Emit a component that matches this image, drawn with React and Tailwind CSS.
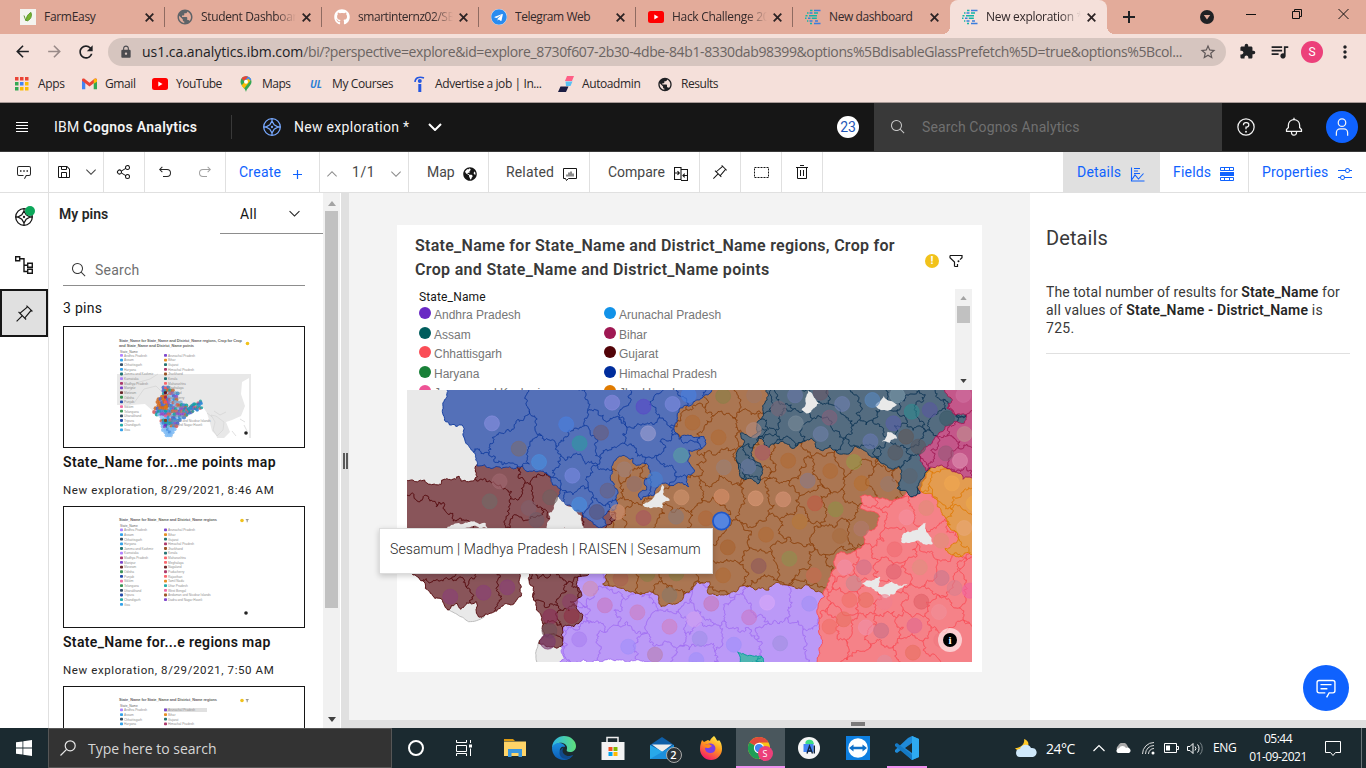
import React from "react";
import {
  MdArrowBack, MdArrowForward, MdRefresh, MdLock, MdStarBorder, MdExtension,
  MdQueueMusic, MdMoreVert, MdPublic,
} from "react-icons/md";
import { FaGithub, FaTelegram, FaGlobeAmericas } from "react-icons/fa";

/* ---------- icons ---------- */

const PATHS = {
  search: "M29 27.586l-7.552-7.552a11.018 11.018 0 1 0-1.414 1.414L27.586 29ZM4 13a9 9 0 1 1 9 9 9.01 9.01 0 0 1-9-9Z",
  chevron: "M16 22 6 12l1.4-1.4 8.6 8.6 8.6-8.6L26 12z",
  save: "M27.71 9.29l-5-5A1 1 0 0 0 22 4H6A2 2 0 0 0 4 6V26a2 2 0 0 0 2 2H26a2 2 0 0 0 2-2V10a1 1 0 0 0-.29-.71zM12 6h8v4H12zm8 20H12V18h8zm2 0V18a2 2 0 0 0-2-2H12a2 2 0 0 0-2 2v8H6V6h4v4a2 2 0 0 0 2 2h8a2 2 0 0 0 2-2V6.41l4 4V26z",
  share: "M23 20a5 5 0 0 0-3.89 1.89l-7.31-4.57a4.46 4.46 0 0 0 0-2.64l7.31-4.57A5 5 0 1 0 18 7a4.79 4.79 0 0 0 .2 1.32l-7.31 4.57a5 5 0 1 0 0 6.22l7.31 4.57A4.79 4.79 0 0 0 18 25a5 5 0 1 0 5-5zm0-16a3 3 0 1 1-3 3 3 3 0 0 1 3-3zM7 19a3 3 0 1 1 3-3 3 3 0 0 1-3 3zm16 9a3 3 0 1 1 3-3 3 3 0 0 1-3 3z",
  undo: "M20 10H7.815l3.587-3.586L10 5 4 11l6 6 1.402-1.415L7.818 12H20a6 6 0 0 1 0 12h-8v2h8a8 8 0 0 0 0-16Z",
  pin: "M28.586 13.314 30 11.9 20 2l-1.314 1.415 1.186 1.186L8.38 14.322 6.66 12.602 5.25 14l5.66 5.67L2 28.583 3.41 30l8.911-8.909L18 26.748l1.395-1.414-1.707-1.709 9.698-11.499zM16.256 22.2 9.792 15.726 21.286 6.004 25.95 10.69z",
  trash: "M12 12h2v12h-2zM18 12h2v12h-2zM4 6v2h2v20a2 2 0 0 0 2 2h16a2 2 0 0 0 2-2V8h2V6zm4 22V8h16v20zM12 2h8v2h-8z",
  help: "M16 2a14 14 0 1 0 14 14A14 14 0 0 0 16 2Zm0 26a12 12 0 1 1 12-12 12 12 0 0 1-12 12ZM17 8h-1.5a4.49 4.49 0 0 0-4.5 4.5v.5h2v-.5a2.5 2.5 0 0 1 2.5-2.5H17a2.5 2.5 0 0 1 0 5h-2v4.5h2V17a4.5 4.5 0 0 0 0-9ZM14.5 23.5a1.5 1.5 0 1 0 3 0 1.5 1.5 0 1 0-3 0",
  bell: "M28.707 19.293 26 16.586V13a10.014 10.014 0 0 0-9-9.95V1h-2v2.05A10.014 10.014 0 0 0 6 13v3.586l-2.707 2.707A1 1 0 0 0 3 20v3a1 1 0 0 0 1 1h7v.777a5.152 5.152 0 0 0 4.5 5.199A5.006 5.006 0 0 0 21 25v-1h7a1 1 0 0 0 1-1v-3a1 1 0 0 0-.293-.707ZM19 25a3 3 0 0 1-6 0v-1h6Zm8-3H5v-1.586l2.707-2.707A1 1 0 0 0 8 17v-4a8 8 0 0 1 16 0v4a1 1 0 0 0 .293.707L27 20.414Z",
  user: "M16 4a5 5 0 1 1-5 5 5 5 0 0 1 5-5m0-2a7 7 0 1 0 7 7 7 7 0 0 0-7-7zM26 30h-2v-5a5 5 0 0 0-5-5h-6a5 5 0 0 0-5 5v5H6v-5a7 7 0 0 1 7-7h6a7 7 0 0 1 7 7z",
  adjust: "M30 8h-4.1a5 5 0 0 0-9.8 0H2v2h14.1a5 5 0 0 0 9.8 0H30zM21 12a3 3 0 1 1 3-3 3 3 0 0 1-3 3zM2 24h4.1a5 5 0 0 0 9.8 0H30v-2H15.9a5 5 0 0 0-9.8 0H2zm9-4a3 3 0 1 1-3 3 3 3 0 0 1 3-3z",
  bubble: "M17.74 30 16 29l4-7h6a2 2 0 0 0 2-2V8a2 2 0 0 0-2-2H6a2 2 0 0 0-2 2v12a2 2 0 0 0 2 2h9v2H6a4 4 0 0 1-4-4V8a4 4 0 0 1 4-4h20a4 4 0 0 1 4 4v12a4 4 0 0 1-4 4h-4.84z",
};

function Icon({ name, size = 16, className = "", detail }) {
  return (
    <svg viewBox="0 0 32 32" width={size} height={size} fill="currentColor" className={"shrink-0 " + className}>
      <path d={PATHS[name]} />
      {detail === "dots" && <path d="M8 12.5h3v3H8zM14.5 12.5h3v3h-3zM21 12.5h3v3h-3z" />}
      {detail === "lines" && <path d="M8 10h16v2H8zM8 16h10v2H8z" />}
    </svg>
  );
}

function Compass({ className = "" }) {
  return (
    <svg viewBox="0 0 20 20" width="20" height="20" fill="none" stroke="currentColor" strokeWidth="1.300" className={"shrink-0 " + className}>
      <circle cx="10" cy="10" r="8.300" />
      <path d="M10 4 12.200 7.800 16 10 12.200 12.200 10 16 7.800 12.200 4 10 7.800 7.800zM10 1.700V4M10 16v2.300M1.700 10H4M16 10h2.300" />
      <circle cx="10" cy="10" r="0.500" />
    </svg>
  );
}

function CognosMark() {
  return (
    <svg viewBox="0 0 16 16" width="16" height="16" className="shrink-0">
      <path d="M9 1.500h6.500M4.500 4h3M10 12h3M4.500 12h3M9 14.500h6.500M3 9.300h2.500" stroke="#3b7ddd" strokeWidth="1.600" />
      <path d="M5 1.500h2.500M2 4h1.500M9 4h4M.5 6.700h2M4 6.700h8M6.800 9.300h5M0 9.300h1.500M2 12h1.300M5 14.500h2" stroke="#12b5a5" strokeWidth="1.600" />
    </svg>
  );
}

/* ---------- browser ---------- */

const SEG = "font-['Open_Sans','Liberation_Sans',sans-serif]";

const TABS = [
  { label: "FarmEasy", icon: "farm", track: "tracking-[-0.3px]" },
  { label: "Student Dashboar", icon: "globe", track: "tracking-[-0.35px]", fade: true },
  { label: "smartinternz02/SB", icon: "github", track: "tracking-[-0.45px]", fade: true },
  { label: "Telegram Web", icon: "telegram", track: "tracking-[-0.45px]" },
  { label: "Hack Challenge 20", icon: "youtube", track: "tracking-[-0.3px]", fade: true },
  { label: "New dashboard", icon: "cognos", track: "tracking-[-0.4px]" },
  { label: "New exploration *", icon: "cognos", track: "tracking-[-0.3px]", active: true, fade: true },
];

function TabIcon({ kind }) {
  if (kind === "farm")
    return (
      <svg viewBox="0 0 16 16" width="16" height="16"><path fill="#f4f4f0" d="M0 0h16v16H0z" /><path d="M4 6.500 6 12M6.500 12C6 8 8 5 11 3.500 12 7 11 10.500 7 12" fill="#79b530" stroke="#5b962a" /></svg>
    );
  if (kind === "globe") return <MdPublic size={18} className="-m-px text-[#5f6368]" />;
  if (kind === "github") return <FaGithub size={16} className="text-white" />;
  if (kind === "telegram")
    return <span className="flex size-4 items-center justify-center rounded-full bg-white"><FaTelegram size={16} className="text-[#2a8bef]" /></span>;
  if (kind === "youtube") return <YouTube />;
  return <CognosMark />;
}

function YouTube() {
  return <svg viewBox="0 0 16 16" width="16" height="16"><rect y="2" width="16" height="12" rx="2.500" fill="#f00" /><path d="M6.300 5.500v5l4.200-2.500z" fill="#fff" /></svg>;
}

function BrowserTabs() {
  return (
    <div className="flex h-[34px] bg-[#e3ab9a] pl-2 text-[12px] text-[#33292a]">
      {TABS.map((t, i) => (
        <div
          key={i}
          className={
            "relative flex h-[34px] w-[157px] shrink-0 items-center pl-3 " +
            (t.active ? "rounded-t-lg bg-[#f5e0da]" : "")
          }
        >
          {t.active && (
            <>
              <span className="absolute -left-2 bottom-0 size-2 bg-[radial-gradient(circle_at_0_0,#e3ab9a_8px,#f5e0da_8px)]" />
              <span className="absolute -right-2 bottom-0 size-2 bg-[radial-gradient(circle_at_100%_0,#e3ab9a_8px,#f5e0da_8px)]" />
            </>
          )}
          <span className="flex size-4 shrink-0 items-center justify-center"><TabIcon kind={t.icon} /></span>
          <span
            className={
              "ml-2 w-[95px] shrink-0 overflow-hidden whitespace-nowrap " + t.track +
              (t.fade ? " [mask-image:linear-gradient(90deg,#000_78%,transparent_100%)]" : "")
            }
          >
            {t.label}
          </span>
          <svg viewBox="0 0 9 9" width="9" height="9" className="ml-[6px] shrink-0" fill="none" stroke="#2c2324" strokeWidth="1.800"><path d="m.7.700 7.600 7.600M8.300.700.700 8.300" /></svg>
          {i < 5 && <span className="absolute right-0 top-[7px] h-5 w-px bg-[#8f6b61]" />}
        </div>
      ))}
      <div className="flex flex-1 items-center text-[#202124]">
        <svg viewBox="0 0 12 12" width="12" height="12" className="ml-[16px] shrink-0" fill="none" stroke="currentColor" strokeWidth="2"><path d="M6 0v12M0 6h12" /></svg>
        <span className="ml-[65px] flex size-[14px] items-center justify-center rounded-full bg-[#202124]">
          <svg viewBox="0 0 8 8" width="8" height="8"><path d="M.8 2h6.400L4 6.500z" fill="#e3ab9a" /></svg>
        </span>
        <svg viewBox="0 0 110 12" width="110" height="12" className="mb-[6px] ml-[32px]" fill="none" stroke="#111" strokeWidth="1">
          <path d="M0 6.500h10M46.500 3.500h7v7h-7zM48.500 3.500v-2h7v7h-2M92.500 1l10 10M102.500 1l-10 10" />
        </svg>
      </div>
    </div>
  );
}

function AddressBar() {
  return (
    <div className="flex h-[35px] items-center bg-[#f5e0da] text-[#202124]">
      <MdArrowBack size={19} className="ml-[13px]" />
      <MdArrowForward size={19} className="ml-[13px] text-[#998a88]" />
      <MdRefresh size={20} className="ml-[12px]" />
      <div className="ml-[12px] flex h-7 w-[1118px] items-center rounded-full bg-[#d6c5bf] pl-[11px] pr-[9px]">
        <MdLock size={14} className="text-[#4c4c50]" />
        <span className="ml-[9px] w-[1049px] overflow-hidden whitespace-nowrap text-[14px] tracking-[-0.38px] text-[#6b6462]">
          <span className="tracking-[-0.04px] text-[#202124]">us1.ca.analytics.ibm.com</span>
          /bi/?perspective=explore&amp;id=explore_8730f607-2b30-4dbe-84b1-8330dab98399&amp;options%5BdisableGlassPrefetch%5D=true&amp;options%5Bcol...
        </span>
        <MdStarBorder size={18} className="ml-auto text-[#5f5858]" />
      </div>
      <MdExtension size={17} className="ml-[13px]" />
      <MdQueueMusic size={21} className="ml-[13px]" />
      <span className="ml-[11px] flex size-[22px] items-center justify-center rounded-full bg-[#ec407a] font-['Roboto',sans-serif] text-[12px] text-white">S</span>
      <MdMoreVert size={20} className="ml-[12px]" />
    </div>
  );
}

function Bookmark({ w, icon, label, track }) {
  return (
    <div className={"flex shrink-0 items-center " + w}>
      <span className="flex size-4 shrink-0 items-center justify-center">{icon}</span>
      <span className={"ml-2 whitespace-nowrap " + track}>{label}</span>
    </div>
  );
}

function Bookmarks() {
  const dots = ["#ea4335", "#ea4335", "#ea4335", "#34a853", "#4285f4", "#fbbc04", "#34a853", "#fbbc04", "#fbbc04"];
  return (
    <div className="flex h-[34px] items-center border-b border-[#a89a97] bg-[#f5e0da] pb-[3px] pl-[14px] text-[12px] text-[#2b2728]">
      <Bookmark w="w-[67px]" label="Apps" track="tracking-[-0.3px]" icon={
        <svg viewBox="0 0 14 14" width="14" height="14">{dots.map((c, i) => <rect key={i} x={(i % 3) * 5} y={Math.floor(i / 3) * 5} width="3.500" height="3.500" fill={c} />)}</svg>} />
      <Bookmark w="w-[71px]" label="Gmail" track="tracking-[-0.4px]" icon={
        <svg viewBox="0 0 16 12" width="15" height="12"><path fill="#4285f4" d="M0 2v9.500h3.500V4z" /><path fill="#34a853" d="M16 2v9.500h-3.500V4z" /><path fill="#ea4335" d="M0 2.500V1.800C0 .2 1.800-.2 3 .700l5 4 5-4c1.200-.9 3-.5 3 1.100v.700L8 8.700z" /><path fill="#fbbc04" d="M12.500 1.100 13.500.500C15 0 16 .9 16 2v1.500l-3.500 2.300z" /></svg>} />
      <Bookmark w="w-[86px]" label="YouTube" track="tracking-[-0.5px]" icon={<YouTube />} />
      <Bookmark w="w-[70px]" label="Maps" track="tracking-[-0.5px]" icon={
        <svg viewBox="0 0 12 16" width="12" height="16"><path fill="#34a853" d="M6 16C5.500 12 .5 10 .5 5.700A5.500 5.500 0 0 1 11.500 5.700C11.500 10 6.500 12 6 16z" /><path fill="#4285f4" d="M6 .2a5.500 5.500 0 0 1 5.200 3.600L4 10z" /><path fill="#ea4335" d="M6 .2C4 .2 2.500 1 1.500 2.500L4 5 8 .7z" /><path fill="#fbbc04" d="M1.500 9.500 8 2.500l2.500 2L4 12.500z" /><circle cx="6" cy="5.700" r="2" fill="#fff" /></svg>} />
      <Bookmark w="w-[103px]" label="My Courses" track="tracking-[-0.4px]" icon={<span className="text-[10px] font-bold italic text-[#2c7fd6]">UL</span>} />
      <Bookmark w="w-[147px]" label="Advertise a job | In..." track="tracking-[-0.4px]" icon={
        <svg viewBox="0 0 12 16" width="12" height="16"><path d="M2 6C2 2 6 0 11 2" stroke="#2557e0" strokeWidth="1.500" fill="none" /><circle cx="6.800" cy="5" r="2" fill="#2557e0" /><path d="M5.300 8h3v8h-3z" fill="#2557e0" /></svg>} />
      <Bookmark w="w-[99px]" label="Autoadmin" track="tracking-[-0.4px]" icon={
        <svg viewBox="0 0 16 16" width="16" height="16"><path d="M9 0h7l-2 5H7z" fill="#ff5e86" /><path d="M7.500 5.500h7L12.500 10H8z" fill="#5ac0f5" /><path d="M2.500 10.500h8L8 16H0z" fill="#1b1d43" /></svg>} />
      <Bookmark w="w-[90px]" label="Results" track="tracking-[-0.45px]" icon={<MdPublic size={17} className="text-[#202124]" />} />
    </div>
  );
}

/* ---------- application header and toolbar ---------- */

function AppHeader() {
  return (
    <div className="flex h-[49px] items-stretch border-b border-[#393939] bg-[#161616] text-[14px] text-[#f4f4f4]">
      <svg viewBox="0 0 12 12" width="12" height="12" className="ml-4 self-center" stroke="#fff"><path d="M0 1.500h12M0 4.500h12M0 7.500h12M0 10.500h12" /></svg>
      <span className="ml-[26px] w-[177px] self-center whitespace-nowrap tracking-[0.28px]">
        IBM <b className="font-semibold">Cognos Analytics</b>
      </span>
      <span className="h-6 w-px self-center bg-[#393939]" />
      <Compass className="ml-[30px] self-center text-[#78a9ff]" />
      <span className="ml-[12px] w-[134px] self-center whitespace-nowrap tracking-[0.3px]">New exploration *</span>
      <svg viewBox="0 0 14 8" width="14" height="8" className="self-center" fill="none" stroke="#fff" strokeWidth="2"><path d="m1 1 6 6 6-6" /></svg>
      <span className="ml-auto mr-[15px] flex size-[22px] items-center justify-center self-center rounded-full bg-white text-[14px] text-[#1f57b8]">23</span>
      <div className="flex w-[348px] items-center bg-[#393939] pl-4">
        <Icon name="search" className="text-[#c6c6c6]" />
        <span className="ml-4 tracking-[0.12px] text-[#707070]">Search Cognos Analytics</span>
      </div>
      <div className="flex w-[144px] items-center">
        <Icon name="help" size={20} className="ml-[14px]" />
        <Icon name="bell" size={20} className="ml-[28px]" />
        <span className="ml-[22px] flex size-8 items-center justify-center rounded-full bg-[#0f62fe]"><Icon name="user" size={20} /></span>
      </div>
    </div>
  );
}

function Cell({ w, children, className = "" }) {
  return <div className={"flex shrink-0 items-center border-r border-[#e0e0e0] " + w + " " + className}>{children}</div>;
}

function Toolbar() {
  return (
    <div className="flex h-[41px] border-b border-[#e0e0e0] bg-white text-[14px] text-[#474747]">
      <Cell w="w-[49px]" className="justify-center"><Icon name="bubble" detail="dots" className="text-[#262626]" /></Cell>
      <Cell w="w-[55px]"><Icon name="save" className="ml-[7px] text-[#161616]" /><Icon name="chevron" className="ml-[11px]" /></Cell>
      <Cell w="w-[41px]" className="justify-center"><Icon name="share" className="text-[#161616]" /></Cell>
      <Cell w="w-[81px]">
        <Icon name="undo" className="ml-[12px] text-[#262626]" />
        <Icon name="undo" className="ml-[24px] -scale-x-100 text-[#a0a0a0]" />
      </Cell>
      <Cell w="w-[94px]" className="text-[#0f62fe]">
        <span className="ml-[13px] w-[54px] tracking-[0.25px]">Create</span>
        <svg viewBox="0 0 9 9" width="9" height="9" stroke="currentColor" strokeWidth="1.200" className="mt-1"><path d="M4.500 0v9M0 4.500h9" /></svg>
      </Cell>
      <Cell w="w-[89px]">
        <Icon name="chevron" className="ml-[4px] mt-1 rotate-180 text-[#8d8d8d]" />
        <span className="ml-[12px] w-[33px] tracking-[0.6px]">1/1</span>
        <Icon name="chevron" className="ml-[3px] mt-1 text-[#8d8d8d]" />
      </Cell>
      <Cell w="w-[80px]"><span className="ml-[18px] w-[36px]">Map</span><FaGlobeAmericas size={14} className="mt-1 text-[#161616]" /></Cell>
      <Cell w="w-[101px]">
        <span className="ml-[17px] w-[57px] tracking-[0.15px]">Related</span>
        <svg viewBox="0 0 14 14" width="14" height="14" className="mt-1" fill="none" stroke="#161616"><path d="M.5 1.500h13v10h-8l-2 2-1-2h-2zM4 9.500v-2M6 9.500v-4M8 9.500v-5M10 9.500v-3" /></svg>
      </Cell>
      <Cell w="w-[110px]">
        <span className="ml-[18px] w-[66px]">Compare</span>
        <svg viewBox="0 0 14 14" width="14" height="14" className="mt-1" fill="none" stroke="#161616" strokeWidth="1.100"><path d="M.5.500h6.500v12H.5zM7 2.500h6.500v11H7M1 6h4M3.500 4.200 5.300 6 3.500 7.800M13 8.500H9M10.700 6.700 8.900 8.500l1.800 1.800" /></svg>
      </Cell>
      <Cell w="w-[41px]" className="justify-center"><Icon name="pin" className="text-[#161616]" /></Cell>
      <Cell w="w-[41px]" className="justify-center">
        <svg viewBox="0 0 15 11" width="15" height="11" fill="none" stroke="#161616"><path strokeDasharray="2 1" d="M.5.500h14v10H.5z" /></svg>
      </Cell>
      <Cell w="w-[41px]" className="justify-center"><Icon name="trash" className="text-[#161616]" /></Cell>
      <div className="ml-auto flex w-[303px] text-[#0f62fe]">
        <div className="flex w-[97px] items-center bg-[#e0e0e0]">
          <span className="ml-[14px] w-[53px] tracking-[0.2px]">Details</span>
          <svg viewBox="0 0 15 15" width="15" height="15" className="mt-1" fill="none" stroke="currentColor" strokeWidth="1.100"><path d="M1.500.500v13.500h13M4 1.500h6M4 4h4M4 6.500h6M2 12.500 5 8l3.500 4 5-5.500" /></svg>
        </div>
        <div className="flex w-[89px] items-center border-r border-[#e0e0e0]">
          <span className="ml-[13px] w-[47px] tracking-[0.2px]">Fields</span>
          <svg viewBox="0 0 14 14" width="14" height="14" className="mt-1"><path d="M.5.500h13v3H.5zM4.500.500v3M9.500.500v3M.5 10.500h13v3H.5zM4.500 10.500v3M9.500 10.500v3" fill="none" stroke="currentColor" /><path d="M0 5h14v4H0z" fill="currentColor" /></svg>
        </div>
        <div className="flex flex-1 items-center">
          <span className="ml-[13px] w-[75px] tracking-[0.2px]">Properties</span>
          <Icon name="adjust" className="mt-1" />
        </div>
      </div>
    </div>
  );
}

/* ---------- pins ---------- */

const LEFT_NAMES = [
  ["#a56eff", "Andhra Pradesh"], ["#1192e8", "Assam"], ["#12304d", "Chhattisgarh"], ["#1192e8", "Haryana"], ["#005d5d", "Jammu and Kashmir"],
  ["#a56eff", "Karnataka"], ["#9f1853", "Madhya Pradesh"], ["#6929c4", "Manipur"], ["#520408", "Mizoram"], ["#198038", "Odisha"],
  ["#002d9c", "Punjab"], ["#ee5396", "Sikkim"], ["#198038", "Telangana"], ["#12304d", "Uttarakhand"], ["#002d9c", "Tripura"], ["#009d9a", "Chandigarh"], ["#1192e8", "Goa"],
];
const RIGHT_NAMES = [
  ["#6929c4", "Arunachal Pradesh"], ["#e07b00", "Bihar"], ["#005d5d", "Gujarat"], ["#9f1853", "Himachal Pradesh"], ["#8a3800", "Jharkhand"],
  ["#005d5d", "Kerala"], ["#fa4d56", "Maharashtra"], ["#fa4d56", "Meghalaya"], ["#520408", "Nagaland"], ["#9f1853", "Puducherry"],
  ["#fa4d56", "Rajasthan"], ["#e07b00", "Tamil Nadu"], ["#009d9a", "Uttar Pradesh"], ["#ee5396", "West Bengal"], ["#8a3800", "Andaman and Nicobar Islands"], ["#6929c4", "Dadra and Nagar Haveli"],
];

function mulberry(seed) {
  let a = seed >>> 0;
  return () => {
    a = (a + 0x6d2b79f5) >>> 0;
    let t = a;
    t = Math.imul(t ^ (t >>> 15), t | 1);
    t ^= t + Math.imul(t ^ (t >>> 7), t | 61);
    return ((t ^ (t >>> 14)) >>> 0) / 4294967296;
  };
}

/* horizontal extent of the subcontinent, one row each: y, left, right */
const SPANS = [
  [60, 99, 105], [63, 99, 110], [66, 99, 113], [69, 98, 112], [72, 94, 114], [75, 93, 118], [78, 94, 123], [81, 91, 128],
  [84, 90, 126], [87, 92, 124], [90, 97, 121], [93, 97, 117], [96, 97, 114], [99, 98, 112], [102, 99, 111], [105, 101, 110], [108, 102, 108],
];

function IndiaDots() {
  const rnd = mulberry(11);
  const mixed = ["#3f7fd0", "#c9692e", "#8ec5f5", "#16a09d", "#4a67c9", "#7fb8ee", "#8e4ec6", "#2b8fd9", "#d45a5a"];
  const out = [];
  SPANS.forEach(([y, l, r]) => {
    for (let x = l; x <= r; x += 2.300) {
      const k = Math.floor(rnd() * 9);
      let fill = mixed[k];
      if (y > 68 && y < 82 && x < 104) fill = k < 6 ? "#d2691e" : "#4a67c9";
      if (y > 100) fill = k < 7 ? "#7fbcf5" : "#4a90e0";
      out.push(<circle key={x + "-" + y} cx={x + rnd()} cy={y + rnd()} r="2" opacity=".88" fill={fill} />);
    }
  });
  for (let i = 0; i < 44; i++) {
    const t = i / 44;
    out.push(<circle key={"e" + i} cx={121 + t * 17} cy={81 - t * 8 + rnd() * 8} r="1.600" opacity=".8" fill={["#16a09d", "#4a67c9", "#2b8fd9", "#16a09d", "#d45a7a"][i % 5]} />);
  }
  return out;
}

function Thumb({ map, select }) {
  const rows = select ? 4 : 17;
  return (
    <svg viewBox="0 0 240 120" width="240" height="120" className="font-['Liberation_Sans',sans-serif]">
      {map && (
        <g>
          <path d="M53 47h134v64H53z" fill="#e8e8e8" />
          <path d="M53 78l14 0 14-1 8 7 4-2 6 12 4 10 4 7H53zM108 111l3-10 8-12 8-6 8-1 4-2 4 6 3 10 2 8 4 4 3 7zM160 111l6-6-4-10 6-2 9-4 4-10-4-12 1-12 7-4v60z" fill="#fff" />
          <path d="M64 66l8-10 14-4 8-5M70 76l10-14 12-3 6 6M143 86l8 6 4 12M150 84l6 4 6-3M168 104l4 5M176 92l5 3M180 98l3 6" fill="none" stroke="#d2d2d2" strokeWidth=".7" />
          <path d="M147 88l4 7-2 8 4 6 6-6 1-8-8-6z" fill="#e6e6e6" stroke="#cfcfcf" strokeWidth=".5" />
        </g>
      )}
      {map && <IndiaDots />}
      <g className="font-bold" fill="#666" fontSize="3.900">
        {map ? (
          <>
            <text x="55" y="14.500" textLength="123">State_Name for State_Name and District_Name regions, Crop for Crop</text>
            <text x="55" y="20" textLength="75">and State_Name and District_Name points</text>
          </>
        ) : (
          <text x="55" y="14" textLength="98">State_Name for State_Name and District_Name regions</text>
        )}
      </g>
      <circle cx={map ? 183.500 : 178} cy={map ? 16.500 : 13.500} r="1.800" fill="#f1c21b" />
      {!map && <path d="M181.500 12h3.500l-1.300 1.800v1.500h-1v-1.500z" fill="#999" />}
      <text x="56" y={map ? 25.500 : 20} fontSize="3.200" fill="#666">State_Name</text>
      {select && <rect x="100" y="21" width="43" height="4" fill="#e0e0e0" />}
      <g fontSize="3.200" fill="#909090">
        {[[LEFT_NAMES, 56], [RIGHT_NAMES, 100]].map(([names, x]) =>
          names.slice(0, rows).map(([c, n], i) => (
            <g key={n}>
              <rect x={x} y={(map ? 27 : 21.500) + i * 4.650} width="3" height="2.800" rx=".8" fill={c} fillOpacity=".85" />
              <text x={x + 4} y={(map ? 29.700 : 24.200) + i * 4.650}>{n}</text>
            </g>
          ))
        )}
      </g>
      {!select && <circle cx="182" cy="106" r="1.800" fill="#222" />}
    </svg>
  );
}

function Pin({ title, time, map, select, track }) {
  return (
    <div>
      <div className="h-[122px] overflow-hidden border border-[#161616] bg-white"><Thumb map={map} select={select} /></div>
      {title && (
        <>
          <div className={"mt-[4px] h-5 whitespace-nowrap text-[14px] font-semibold leading-5 text-[#161616] " + track}>{title}</div>
          <div className="mb-[8px] mt-[10px] h-4 whitespace-nowrap text-[11.5px] leading-4 tracking-[0.6px] text-[#262626]">{time}</div>
        </>
      )}
    </div>
  );
}

function PinsPanel() {
  return (
    <div className="flex w-[274px] shrink-0 flex-col overflow-hidden bg-white text-[14px]">
      <div className="flex h-[41px] shrink-0">
        <span className="ml-[10px] mt-[11px] w-[161px] font-semibold leading-5 text-[#262626]">My pins</span>
        <div className="flex flex-1 border-b border-[#8d8d8d]">
          <span className="ml-[20px] mt-[11px] w-[46px] leading-5 tracking-[0.3px] text-[#161616]">All</span>
          <Icon name="chevron" size={17} className="mt-[12px] text-[#262626]" />
        </div>
      </div>
      <div className="ml-[14px] mt-[19px] flex h-[33px] w-[242px] shrink-0 items-center border-b border-[#8d8d8d]">
        <Icon name="search" className="ml-[8px] mt-px text-[#393939]" />
        <span className="ml-[8px] mt-[3px] tracking-[0.25px] text-[#6f6f6f]">Search</span>
      </div>
      <div className="ml-[14px] mt-[12px] h-5 shrink-0 leading-5 tracking-[0.3px] text-[#161616]">3 pins</div>
      <div className="ml-[14px] mt-[8px] w-[242px]">
        <Pin map title="State_Name for...me points map" time="New exploration, 8/29/2021, 8:46 AM" track="tracking-[0.36px]" />
        <Pin title="State_Name for...e regions map" time="New exploration, 8/29/2021, 7:50 AM" track="tracking-[0.33px]" />
        <Pin select />
      </div>
    </div>
  );
}

function Rail() {
  return (
    <div className="flex w-[49px] shrink-0 flex-col border-r border-[#e0e0e0] bg-white text-[#161616]">
      <div className="relative flex h-12 items-center justify-center">
        <Compass />
        <span className="absolute left-[25px] top-[13px] size-[10px] rounded-full bg-[#0ca75a]" />
      </div>
      <div className="flex h-12 items-center justify-center">
        <svg viewBox="0 0 18 18" width="18" height="18" fill="none" stroke="currentColor" strokeWidth="1.400"><path d="M.7.700h4v4h-4zM12.700 7.200h4.600v4h-4.600zM12.700 13.200h4.600v4h-4.600zM4.700 2.700H9V15.500h3.700M9 9.200h3.700" /></svg>
      </div>
      <div className="flex h-12 w-12 items-center justify-center border-2 border-[#161616] bg-[#e0e0e0]"><Icon name="pin" size={19} /></div>
    </div>
  );
}

/* ---------- map ---------- */

const W = 565, H = 272;
const pt = ([x, y]) => [(x - 44) / 2.613, (y - 30) / 3];

function rough(a, b, amp, out) {
  const flip = a[0] > b[0] || (a[0] === b[0] && a[1] > b[1]);
  const [p, q] = flip ? [b, a] : [a, b];
  const rnd = mulberry(Math.round(p[0] * 71 + p[1] * 1931 + q[0] * 377 + q[1] * 9157));
  const seg = (m, n) => {
    const len = Math.hypot(n[0] - m[0], n[1] - m[1]);
    if (len < 2.200) return [n];
    const k = (rnd() - 0.5) * amp * Math.min(len, 18);
    const mid = [(m[0] + n[0]) / 2 - ((n[1] - m[1]) / len) * k, (m[1] + n[1]) / 2 + ((n[0] - m[0]) / len) * k];
    return [...seg(m, mid), ...seg(mid, n)];
  };
  let line = [p, ...seg(p, q)];
  if (flip) line = line.reverse();
  out.push(...line.slice(1));
}

function ring(points, amp = 0.45) {
  const pts = points.map(pt);
  const out = [pts[0]];
  pts.forEach((p, i) => rough(p, pts[(i + 1) % pts.length], amp, out));
  return "M" + out.map((p) => p[0].toFixed(1) + " " + p[1].toFixed(1)).join("L") + "Z";
}

/* Painted in order: each region runs beneath the neighbours that follow it. */
const STATES = {
  mh: { fill: "#bb99f7", line: "#a06cf3", pts: [[492,560],[1160,560],[1180,700],[1180,860],[436,860],[455,835],[450,740],[460,700],[460,650],[490,640],[480,600]] },
  mp: { fill: "#ab7652", line: "#8a3e08", pts: [[810,0],[1060,0],[1060,120],[1420,180],[1420,400],[1330,560],[1190,600],[1135,652],[1115,635],[1090,615],[1060,625],[1015,608],[990,630],[955,630],[920,618],[905,635],[880,645],[830,640],[835,605],[800,605],[770,640],[750,670],[725,672],[708,680],[700,645],[640,640],[610,625],[555,612],[550,500],[540,380],[560,200],[730,200],[735,60]] },
  cg: { fill: "#f58288", line: "#fa4d56", pts: [[1385,335],[1400,290],[1540,290],[1540,860],[1115,860],[1130,780],[1115,690],[1135,650],[1150,590],[1165,565],[1178,515],[1210,515],[1240,490],[1250,450],[1280,410],[1265,395],[1228,385],[1235,370],[1228,350],[1290,355],[1320,358],[1345,345]] },
  up: { fill: "#546c80", line: "#0b3353", pts: [[985,10],[1540,10],[1540,180],[1430,260],[1405,270],[1395,290],[1385,340],[1360,350],[1325,325],[1335,290],[1330,258],[1300,262],[1280,245],[1250,225],[1215,198],[1190,222],[1170,220],[1150,195],[1130,212],[1115,205],[1100,175],[1050,205],[1010,190],[990,203],[975,180],[958,140],[975,100],[985,60]] },
  jhansi: { fill: "#546c80", line: "#0b3353", pts: [[985,150],[945,172],[915,160],[918,200],[905,240],[915,290],[930,298],[960,312],[972,275],[950,235],[948,200]] },
  jh: { fill: "#e39c50", line: "#e07b00", pts: [[1405,275],[1450,200],[1540,200],[1540,525],[1500,520],[1480,530],[1450,505],[1485,470],[1450,410],[1430,380],[1405,340],[1388,335],[1395,300]] },
  br: { fill: "#c4578a", line: "#9f1853", pts: [[1440,10],[1540,10],[1540,290],[1497,298],[1490,280],[1450,262],[1400,272],[1390,210],[1425,170],[1450,140],[1500,130],[1505,105],[1455,85],[1470,60]] },
  guj: { fill: "#89555a", line: "#520408", pts: [[30,303],[90,300],[105,313],[133,313],[135,300],[180,288],[185,303],[205,305],[228,290],[222,262],[245,240],[450,240],[500,380],[590,400],[565,440],[555,570],[490,590],[488,620],[500,640],[470,665],[500,700],[495,728],[480,740],[455,738],[450,795],[388,790],[398,730],[382,690],[372,650],[375,620],[365,585],[340,575],[343,620],[325,668],[240,712],[225,665],[200,668],[185,688],[175,670],[150,690],[105,640],[60,585],[30,560]] },
  raj: { fill: "#5470b8", line: "#0f3a9e", pts: [[142,10],[142,60],[137,100],[155,135],[188,135],[190,165],[212,210],[228,258],[300,262],[345,257],[360,275],[420,290],[425,315],[445,330],[440,352],[470,375],[472,400],[500,395],[505,412],[540,440],[565,435],[556,410],[590,385],[595,335],[585,310],[578,260],[590,240],[635,235],[635,250],[670,250],[685,285],[665,300],[670,330],[650,340],[655,360],[690,345],[710,310],[745,312],[780,320],[775,290],[795,270],[778,240],[780,210],[815,205],[825,190],[820,170],[755,178],[742,140],[750,105],[800,60],[830,45],[880,10]] },
  tg: { fill: "#4eb5b2", line: "#009d9a", pts: [[908,815],[930,825],[965,828],[978,850],[915,850]] },
};

const NONE = [
  [[1075,90],[1085,55],[1092,32],[1110,55],[1125,70],[1110,82],[1093,100]],
  [[1268,78],[1290,48],[1325,75],[1300,92]],
  [[1285,185],[1300,155],[1325,175],[1305,188]],
  [[660,372],[690,350],[710,312],[730,362],[712,368],[712,385],[680,385]],
  [[1335,485],[1350,455],[1400,428],[1405,460],[1418,492],[1370,485]],
  [[1232,610],[1280,590],[1275,620],[1310,605],[1352,612],[1320,640],[1297,655],[1275,635]],
  [[410,435],[430,370],[440,350],[470,380],[500,410],[503,450],[410,450]],
  [[150,440],[190,432],[250,430],[260,450],[150,450]],
];

const DOTS = [
  [266,130,"#8a90e0"],[336,206,"#7a6a70"],[389,246,"#4a90e0"],[460,133,"#4a80e0"],[495,190,"#2f9aa0"],[551,158,"#6b5c78"],[580,68,"#8a8ae0"],[662,80,"#5a48c8"],[738,72,"#7f8ae0"],[674,160,"#a0a0d0"],[476,287,"#7a88e0"],[760,226,"#5aa0a0"],[692,298,"#4a80d0"],[568,332,"#6a6080"],[494,374,"#4a90e0"],[540,396,"#5a5478"],[780,45,"#4a80e0"],
  [612,268,"#a08078"],[638,312,"#907070"],[594,396,"#d09070"],[662,414,"#a85560"],[747,410,"#8a7a78"],[761,352,"#d09470"],[866,350,"#d88f6a"],[955,355,"#dc9a78"],[1027,358,"#d89478"],[825,415,"#b06838"],[872,262,"#9a8078"],[858,172,"#b06a35"],[790,128,"#b06a35"],[870,48,"#8a8048"],[951,46,"#a07868"],[973,218,"#a85868"],[1040,242,"#b06a35"],[1091,302,"#8a7a88"],[1150,273,"#b06a35"],[1212,246,"#96984a"],[1232,310,"#b87030"],[1301,312,"#987a70"],[1110,370,"#c05a45"],[1164,388,"#909048"],[1070,425,"#b87838"],[1231,446,"#b07a70"],[982,464,"#b06a35"],[882,502,"#a8632e"],[1043,536,"#8f9050"],[963,558,"#90585c"],[870,586,"#b06a35"],[1107,586,"#c86a50"],[730,645,"#8a7868"],[602,596,"#a86050"],[672,582,"#8a8048"],[748,580,"#8a8048"],[1175,468,"#a86c40"],
  [1015,86,"#786878"],[1058,46,"#6a78a8"],[1181,72,"#7080b0"],[1060,130,"#7a8a98"],[1148,113,"#86607a"],[1125,162,"#7080a8"],[1260,60,"#5a88c0"],[1325,46,"#7a98a8"],[1363,95,"#2f8a90"],[1410,90,"#5a58a0"],[1315,130,"#5a60a8"],[1255,184,"#6878b0"],[1348,170,"#605858"],[1320,218,"#5a5a60"],[1358,288,"#5c6470"],[936,260,"#6878a0"],[1125,38,"#6a5868"],[1380,200,"#5a5860"],[950,150,"#b08a80"],[1455,115,"#3a5a68"],
  [1498,45,"#d070a0"],[1501,162,"#c09090"],[1452,220,"#985878"],[1489,242,"#e090b0"],
  [1468,310,"#f0a850"],[1500,444,"#e8a878"],[1525,370,"#eca84a"],
  [1401,384,"#e08c78"],[1349,412,"#f590a0"],[1318,508,"#f06a72"],[1440,482,"#e09078"],[1188,562,"#f090a8"],[1238,562,"#d07088"],[1316,575,"#e06070"],[1384,562,"#e09080"],[1441,594,"#c87890"],[1211,610,"#c88890"],[1475,624,"#d88090"],[1243,660,"#e87060"],[1292,666,"#f08090"],[1388,665,"#e06068"],[1185,718,"#e87060"],[1243,742,"#f090a8"],[1283,752,"#c87088"],[1370,737,"#e06890"],[1434,696,"#f0909a"],[1366,818,"#e87060"],[1148,740,"#f07068"],[1200,660,"#f07068"],[1292,848,"#e090a0"],[1515,632,"#f060a0"],[1440,780,"#f07880"],
  [523,626,"#d090b0"],[561,676,"#c878c0"],[646,697,"#cc7fc0"],[730,740,"#d080c0"],[839,671,"#c878b8"],[794,718,"#d0a0f0"],[985,668,"#d8a8f8"],[938,712,"#c878c8"],[1095,671,"#a090f5"],[1019,790,"#a090e0"],[898,794,"#9f90fa"],[809,776,"#9f90e8"],[800,840,"#9f90fa"],[692,824,"#b880b0"],[622,800,"#a090fa"],[494,778,"#a880f0"],
  [286,304,"#a06870"],[260,364,"#706a68"],[362,384,"#80606c"],[382,420,"#705c68"],[418,352,"#706060"],[306,622,"#8a3f78"],[244,638,"#8a3f78"],[157,650,"#8a3f78"],[200,565,"#805a60"],[418,710,"#8a3058"],[416,752,"#705058"],[474,708,"#8f3048"],[470,665,"#8a4068"],[412,785,"#7a3a70"],[150,540,null],[450,560,null],[420,640,null],
];

function voronoi(points) {
  return points.map((p, i) => {
    let poly = [[-20, -20], [W + 20, -20], [W + 20, H + 20], [-20, H + 20]];
    points.forEach((q, j) => {
      if (i === j) return;
      const mx = (p[0] + q[0]) / 2, my = (p[1] + q[1]) / 2, dx = q[0] - p[0], dy = q[1] - p[1];
      const side = (v) => (v[0] - mx) * dx + (v[1] - my) * dy;
      const next = [];
      poly.forEach((a, k) => {
        const b = poly[(k + 1) % poly.length];
        const sa = side(a), sb = side(b);
        if (sa <= 0) next.push(a);
        if (sa < 0 !== sb < 0) {
          const t = sa / (sa - sb);
          next.push([a[0] + (b[0] - a[0]) * t, a[1] + (b[1] - a[1]) * t]);
        }
      });
      poly = next;
    });
    return poly;
  });
}

const quarter = (p) => [Math.round(p[0] * 4) / 4, Math.round(p[1] * 4) / 4];
const DISTRICTS = voronoi(DOTS.map(pt))
  .map((poly) => {
    const pts = poly.map(quarter);
    if (!pts.length) return "";
    const out = [pts[0]];
    pts.forEach((p, i) => rough(p, pts[(i + 1) % pts.length], 0.78, out));
    return "M" + out.map((p) => p[0].toFixed(1) + " " + p[1].toFixed(1)).join("L") + "Z";
  })
  .join("");

const SHAPES = Object.entries(STATES).map(([id, s]) => ({ id, ...s, d: ring(s.pts) }));
const GAPS = NONE.map((p) => ring(p, 0.4));
const LAND = [
  [[30,10],[600,10],[600,300],[500,450],[400,450],[400,330],[30,330]],
  [[150,688],[175,665],[240,665],[245,712],[225,722],[205,725]],
  [[390,780],[470,760],[470,860],[385,850],[380,820]],
].map((p) => ring(p, 0.12)).join("");

function RegionMap() {
  return (
    <svg viewBox="0 0 565 272" width="565" height="272" className="block">
      <defs>{SHAPES.map((s) => <clipPath key={s.id} id={"state-" + s.id}><path d={s.d} /></clipPath>)}</defs>
      <rect width="565" height="272" fill="#fff" />
      <path d={LAND} fill="#e9e9e9" stroke="#bdbdbd" />
      {SHAPES.map((s) => (
        <g key={s.id}>
          <path d={s.d} fill={s.fill} stroke={s.line} strokeWidth=".9" />
          <path d={DISTRICTS} clipPath={"url(#state-" + s.id + ")"} fill="none" stroke={s.line} strokeWidth=".5" />
        </g>
      ))}
      {GAPS.map((d, i) => <path key={i} d={d} fill="#e9e9e9" />)}
      {DOTS.filter((d) => d[2]).map((d, i) => {
        const [x, y] = pt(d);
        return <circle key={i} cx={x} cy={y} r="7.500" fill={d[2]} fillOpacity=".6" stroke={d[2]} strokeOpacity=".7" strokeWidth=".8" />;
      })}
      <circle cx="314.500" cy="131" r="8.600" fill="#5585e0" stroke="#1f57c8" strokeWidth="1.800" />
    </svg>
  );
}

/* ---------- canvas ---------- */

const LEGEND = [
  ["bg-[#6929c4]", "Andhra Pradesh", "bg-[#1192e8]", "Arunachal Pradesh"],
  ["bg-[#005d5d]", "Assam", "bg-[#9f1853]", "Bihar"],
  ["bg-[#fa4d56]", "Chhattisgarh", "bg-[#520408]", "Gujarat"],
  ["bg-[#198038]", "Haryana", "bg-[#002d9c]", "Himachal Pradesh"],
  ["bg-[#ee5396]", "Jammu and Kashmir", "bg-[#e07b00]", "Jharkhand"],
];

function LegendItem({ dot, label, w }) {
  return (
    <div className={"flex h-[19.6px] items-start " + w}>
      <span className={"size-3 shrink-0 rounded-full " + dot} />
      <span className="ml-[3px] mt-[1px] whitespace-nowrap leading-[14px]">{label}</span>
    </div>
  );
}

function Card() {
  return (
    <div className="relative ml-[48px] mt-8 h-[447px] w-[585px] bg-white">
      <div className="flex h-[64px] pl-[18px]">
        <div className="mt-[9px] w-[510px] whitespace-nowrap text-[16px] font-semibold leading-6 text-[#393939]">
          <div className="tracking-[0.28px]">State_Name for State_Name and District_Name regions, Crop for</div>
          <div className="tracking-[0.32px]">Crop and State_Name and District_Name points</div>
        </div>
        <span className="mt-[29px] flex size-[14px] items-center justify-center rounded-full bg-[#f1c21b] text-[11px] font-bold text-white">!</span>
        <svg viewBox="0 0 14 14" width="14" height="14" className="ml-[10px] mt-[29px]" fill="none" stroke="#161616" strokeWidth="1.200"><path d="M1 1.500h12v2.200l-2 2M5.500 12.500V8L1 3.700V1.500M5.500 12.500h3V10" /><circle cx="9.500" cy="7.300" r="1" fill="#161616" stroke="none" /></svg>
      </div>
      <div className="ml-[10px] flex h-[101px] w-[565px] overflow-hidden font-['Liberation_Sans',sans-serif] text-[12px] text-[#767676]">
        <div className="w-[548px] pl-[12px]">
          <div className="h-[18px] font-['Roboto',sans-serif] leading-[17px] tracking-[0.15px] text-[#161616]">State_Name</div>
          {LEGEND.map((r) => (
            <div key={r[1]} className="flex">
              <LegendItem dot={r[0]} label={r[1]} w="w-[185px]" />
              <LegendItem dot={r[2]} label={r[3]} w="w-[185px]" />
            </div>
          ))}
        </div>
        <div className="flex w-[17px] flex-col items-center bg-[#f1f1f1]">
          <svg viewBox="0 0 8 5" width="7" height="4" className="mt-[7px]"><path d="M4 0l4 5H0z" fill="#a3a3a3" /></svg>
          <span className="mt-[6px] h-[17px] w-[13px] bg-[#c1c1c1]" />
          <svg viewBox="0 0 8 5" width="7" height="4" className="mb-[7px] mt-auto"><path d="M0 0h8L4 5z" fill="#404040" /></svg>
        </div>
      </div>
      <div className="ml-[10px]"><RegionMap /></div>
      <span className="absolute left-[541px] top-[403px] flex size-6 items-center justify-center rounded-full bg-white/60">
        <span className="flex size-[14px] items-center justify-center rounded-full bg-black font-['Liberation_Serif',serif] text-[11px] font-bold text-white">i</span>
      </span>
      <div className="absolute -left-[18px] top-[303px] flex h-[46px] w-[334px] items-center whitespace-nowrap border border-[#dcdcdc] bg-white pb-[4px] pl-[10px] text-[14px] font-light tracking-[0.12px] text-[#262626] shadow-[0_2px_6px_rgba(0,0,0,0.2)]">
        Sesamum | Madhya Pradesh | RAISEN | Sesamum
      </div>
    </div>
  );
}

function Details() {
  return (
    <div className="relative w-[336px] shrink-0 bg-white px-4 text-[#393939]">
      <div className="pt-[32px] text-[20px] leading-[26px] tracking-[0.1px]">Details</div>
      <div className="mt-[32px] border-b border-[#e0e0e0] pb-[16px] text-[14px] leading-[18px]">
        <div className="whitespace-nowrap tracking-[0.08px]">The total number of results for <b className="font-semibold text-[#262626]">State_Name</b> for</div>
        <div className="whitespace-nowrap tracking-[0.18px]">all values of <b className="font-semibold text-[#262626]">State_Name - District_Name</b> is</div>
        <div className="tracking-[0.3px]">725.</div>
      </div>
      <span className="absolute left-[273px] top-[472px] flex size-[46px] items-center justify-center rounded-full bg-[#0f62fe] text-white">
        <Icon name="bubble" size={22} detail="lines" />
      </span>
    </div>
  );
}

function Workspace() {
  return (
    <div className="flex h-[535px]">
      <Rail />
      <PinsPanel />
      <div className="flex w-[18px] shrink-0 flex-col items-center border-r border-white bg-[#f1f1f1]">
        <svg viewBox="0 0 8 5" width="8" height="5" className="mt-[8px]"><path d="M4 0l4 5H0z" fill="#a3a3a3" /></svg>
        <span className="mt-[5px] h-[397px] w-[13px] bg-[#c1c1c1]" />
        <svg viewBox="0 0 8 5" width="8" height="5" className="mb-[6px] mt-auto"><path d="M0 0h8L4 5z" fill="#404040" /></svg>
      </div>
      <div className="flex w-2 shrink-0 items-start gap-px bg-[#e0e0e0] pl-[2px] pt-[260px]">
        <span className="h-4 w-[2px] bg-[#5a5a5a]" />
        <span className="h-4 w-[2px] bg-[#5a5a5a]" />
      </div>
      <div className="flex min-w-0 flex-1 flex-col">
        <div className="flex h-[527px]">
          <div className="w-[681px] shrink-0 bg-[#f3f3f3]"><Card /></div>
          <Details />
        </div>
        <div className="flex h-2 items-center bg-[#e0e0e0] pl-[502px]"><span className="h-1 w-[14px] bg-[#7a7a7a]" /></div>
      </div>
    </div>
  );
}

/* ---------- taskbar ---------- */

const APPS = [
  <svg viewBox="0 0 22 18" width="22" height="18"><path d="M0 0h9l2 2h-11z" fill="#dd9a10" /><path d="M0 2.500h22V17H0z" fill="#ffd467" /><path d="M4 10h14v8h-3.500v-4h-7v4H4z" fill="#3a96dd" /></svg>,
  <svg viewBox="0 0 24 24" width="24" height="24"><defs><linearGradient id="edgeA" x1="0" x2="1"><stop offset="0" stopColor="#2cb5e8" /><stop offset="1" stopColor="#5fe07a" /></linearGradient><linearGradient id="edgeB" x1="0" y1="0" x2="0" y2="1"><stop offset="0" stopColor="#1b8fe0" /><stop offset="1" stopColor="#0c5cb5" /></linearGradient></defs><path d="M0 11C1 4 6 0 12 0c7 0 12 5 12 10 0 4-3 6-6 6-3 0-4-1-3-3C16 9 11 6 7 7 3 8 1 10 0 12z" fill="url(#edgeA)" /><path d="M0 12C1 8 5 6.500 8 7c3 .5 5 2 5 4-3-1-6 1-5 5 1 4 6 6 13 3-2 3-5 5-9 5C5 24 0 19 0 12z" fill="url(#edgeB)" /><path d="M12.500 11c-2 1-3 5 0 7.500s7 2 9 .5c-3 4-7 4.500-10 3.500C7 21 5 14 12.500 11z" fill="#114a8b" /></svg>,
  <svg viewBox="0 0 24 24" width="24" height="24"><path d="M6 6V1.500h11V6" fill="none" stroke="#eee" strokeWidth="1.500" /><path d="M.5 6h23v18H.5z" fill="#f3f3f3" /><path d="M7.500 11h4v4h-4z" fill="#f25022" /><path d="M12.500 11h4v4h-4z" fill="#7fba00" /><path d="M7.500 16h4v4h-4z" fill="#00a4ef" /><path d="M12.500 16h4v4h-4z" fill="#ffb900" /></svg>,
  <span className="relative"><svg viewBox="0 0 24 22" width="24" height="22"><path d="M0 8 12 0l12 8v14H0z" fill="#0f5fa8" /><path d="M2 7.500h20L12 15z" fill="#eee" /><path d="M0 8l13 7 11-7v14H0z" fill="#28a8ea" /><path d="M0 22 24 8v14z" fill="#1c8fdb" /></svg><span className="absolute left-[16px] top-[10px] flex size-4 items-center justify-center rounded-full border border-[#aaa] bg-[#2b3236] text-[11px] font-semibold text-white">2</span></span>,
  <svg viewBox="0 0 24 24" width="24" height="24"><defs><linearGradient id="fox" x1=".8" y1="0" x2=".3" y2="1"><stop offset="0" stopColor="#fff44f" /><stop offset=".45" stopColor="#ff9a1f" /><stop offset="1" stopColor="#f5156c" /></linearGradient></defs><path d="M15 0c3 3 2 4 4 5l1-1c2 2 3 5 3 9a11 11 0 0 1-22 0C1 9 2 7 3 4l2 2 4-2 2 1c0-2 2-3 4-5z" fill="url(#fox)" /><path d="M6 9c4-2 7-2 9 0 3 3 1 8-3 8s-6-2-6-5l3-1z" fill="#7b3fe4" /><path d="M4 9l6-1 3 2-3 2-2 0z" fill="#ff8a16" /></svg>,
  <span className="relative size-6"><svg viewBox="0 0 24 24" width="22" height="22" className="mt-px"><circle cx="12" cy="12" r="12" fill="#fbc116" /><path d="M12 12 1.600 6A12 12 0 0 1 22.400 6H12z" fill="#e04a3c" /><path d="M12 12 1.600 6A12 12 0 0 0 12 24l5-9z" fill="#1e9e56" /><circle cx="12" cy="12" r="5.600" fill="#fff" /><circle cx="12" cy="12" r="4.500" fill="#4285f4" /></svg><span className="absolute left-[10px] top-[10px] flex size-[15px] items-center justify-center rounded-full bg-[#ec407a] text-[9px] text-white">S</span></span>,
  <svg viewBox="0 0 22 22" width="22" height="22"><circle cx="11" cy="11" r="11" fill="#f5f5f5" /><path d="M5.500 7h10v8h-10z" fill="#4285f4" /><path d="M7.500 7a3.500 3 0 0 1 8-1.500l.5 1.500z" fill="#3ddc84" /><path d="M9 16.500 11.500 9l3 7.500M10.500 14h3M16.300 8.500v8" stroke="#12233c" strokeWidth="1.400" fill="none" /></svg>,
  <svg viewBox="0 0 24 24" width="24" height="24"><path d="M0 0h24v24H0z" fill="#0e7fe0" /><circle cx="12" cy="12" r="9.800" fill="#fff" /><path d="M3 12l4.500-3.500v2.300h9V8.500L21 12l-4.500 3.500v-2.300h-9v2.300z" fill="#0e6fc8" /></svg>,
  <svg viewBox="0 0 24 24" width="24" height="24"><path d="M17 0l7 3v18l-7 3L6 14l-4 3-2-1v-2l13-12zM17 7l-7 5 7 5z" fill="#1f8ad8" fillRule="evenodd" /><path d="M17 0l7 3v18l-7 3z" fill="#2eaaf0" /><path d="M0 8l2-1 15 12v5L0 10z" fill="#1579c4" /></svg>,
];

function Taskbar() {
  return (
    <div className="flex h-10 bg-[#1b2a30] text-white">
      <div className="flex w-12 items-center justify-center">
        <svg viewBox="0 0 16 16" width="16" height="16" fill="#fff"><path d="M0 2.300 6.500 1.400v6.200H0zM7.300 1.300 16 0v7.600H7.300zM0 8.400h6.500v6.200L0 13.700zM7.300 8.400H16V16l-8.700-1.300z" /></svg>
      </div>
      <div className="flex w-[344px] items-center border border-[#565656] bg-[#333] pl-[11px]">
        <svg viewBox="0 0 16 16" width="16" height="16" fill="none" stroke="#e8e8e8" strokeWidth="1.200"><circle cx="10.200" cy="5.800" r="5" /><path d="M6.600 9.400.5 15.500" /></svg>
        <span className="ml-[12px] text-[14px] tracking-[-0.02px] text-[#d6d6d6]">Type here to search</span>
      </div>
      <div className="flex w-12 items-center justify-center"><span className="size-[16px] rounded-full border-2 border-white" /></div>
      <div className="flex w-[51px] items-center pl-[16px]">
        <svg viewBox="0 0 16 16" width="16" height="16" fill="none" stroke="#fff"><path d="M.5 0v2.500h10V0M.5 5.500h10v6H.5zM.5 16v-2.500h10V16M14.500 0v3M14.500 8.500V16" /><path d="M13 4.500h3v3h-3z" fill="#fff" stroke="none" /></svg>
      </div>
      {APPS.map((a, i) => (
        <div key={i} className={"relative flex w-[49px] items-center justify-center pr-[2px] " + (i === 5 ? "bg-[#4a575d]" : "")}>
          {a}
          {i === 5 && <span className="absolute inset-x-0 bottom-0 h-[2px] bg-[#ee90ee]" />}
          {i === 8 && <span className="absolute bottom-0 left-[4px] right-[5px] h-[2px] bg-[#ee90ee]" />}
        </div>
      ))}
      <div className="ml-auto flex items-center text-[12px]">
        <svg viewBox="0 0 22 18" width="22" height="18"><path d="M9 0c1 4-2 9-9 9 3 4 9 4 12 0s1-8-3-9z" fill="#ffc928" /><path d="M5 18a4 4 0 0 1 0-8 6 6 0 0 1 11-1 4.500 4.500 0 0 1 2 9z" fill="#cfe8fa" /></svg>
        <span className="ml-[9px] w-[38px] whitespace-nowrap text-[14px] tracking-[-0.5px]">24°C</span>
        <svg viewBox="0 0 12 8" width="12" height="8" className="ml-[9px]" fill="none" stroke="#fff" strokeWidth="1.200"><path d="m.5 7 5.500-5.500L11.500 7" /></svg>
        <svg viewBox="0 0 16 10" width="16" height="10" className="ml-[10px]"><path d="M3 8a3 3 0 0 1 0-5 5 5 0 0 1 9-1l2 4z" fill="#aaa" /><path d="M3 10a2.500 2.500 0 0 1 1-4.800A4 4 0 0 1 11 5a2.600 2.600 0 0 1 3 5z" fill="#fff" /></svg>
        <svg viewBox="0 0 13 13" width="13" height="13" className="ml-[11px]" fill="none" stroke="#ddd"><path d="M.5 12A11.500 11.500 0 0 1 12 .5M3.500 12A8.500 8.500 0 0 1 12 3.500M6.500 12A5.500 5.500 0 0 1 12 6.500" /><circle cx="11" cy="11" r="1.500" fill="#fff" stroke="none" /></svg>
        <svg viewBox="0 0 15 10" width="15" height="10" className="ml-[9px]"><path d="M.5.500h12v9H.5zM13 3.500h1.500v3H13" fill="none" stroke="#fff" /><path d="M2 2.500h4v5H2z" fill="#fff" /></svg>
        <svg viewBox="0 0 17 13" width="17" height="13" className="ml-[8px]" fill="none" stroke="#fff"><path d="M.5 4.500h2.500l3-3v10l-3-3H.5zM8 4.500a3 3 0 0 1 0 4M10.500 2.500a6 6 0 0 1 0 8" /><path d="M13 .5a9 9 0 0 1 0 12" stroke="#7a8488" /></svg>
        <span className="ml-[9px] w-[24px] tracking-[-0.4px]">ENG</span>
        <div className="ml-[10px] w-[62px] whitespace-nowrap text-center leading-[18px] tracking-[-0.5px]"><div>05:44</div><div>01-09-2021</div></div>
        <svg viewBox="0 0 17 17" width="17" height="17" className="ml-[16px]" fill="none" stroke="#fff"><path d="M.5 1.500h15v11h-5l-2.500 3-2.500-3h-5z" /></svg>
        <span className="ml-[19px] mr-1 h-10 w-px bg-[#6b7579]" />
      </div>
    </div>
  );
}

export default function App() {
  return (
    <div className={"h-[768px] w-[1366px] overflow-hidden bg-white " + SEG}>
      <BrowserTabs />
      <AddressBar />
      <Bookmarks />
      <div className="font-['Roboto','Liberation_Sans',sans-serif]">
        <AppHeader />
        <Toolbar />
        <Workspace />
      </div>
      <Taskbar />
    </div>
  );
}
